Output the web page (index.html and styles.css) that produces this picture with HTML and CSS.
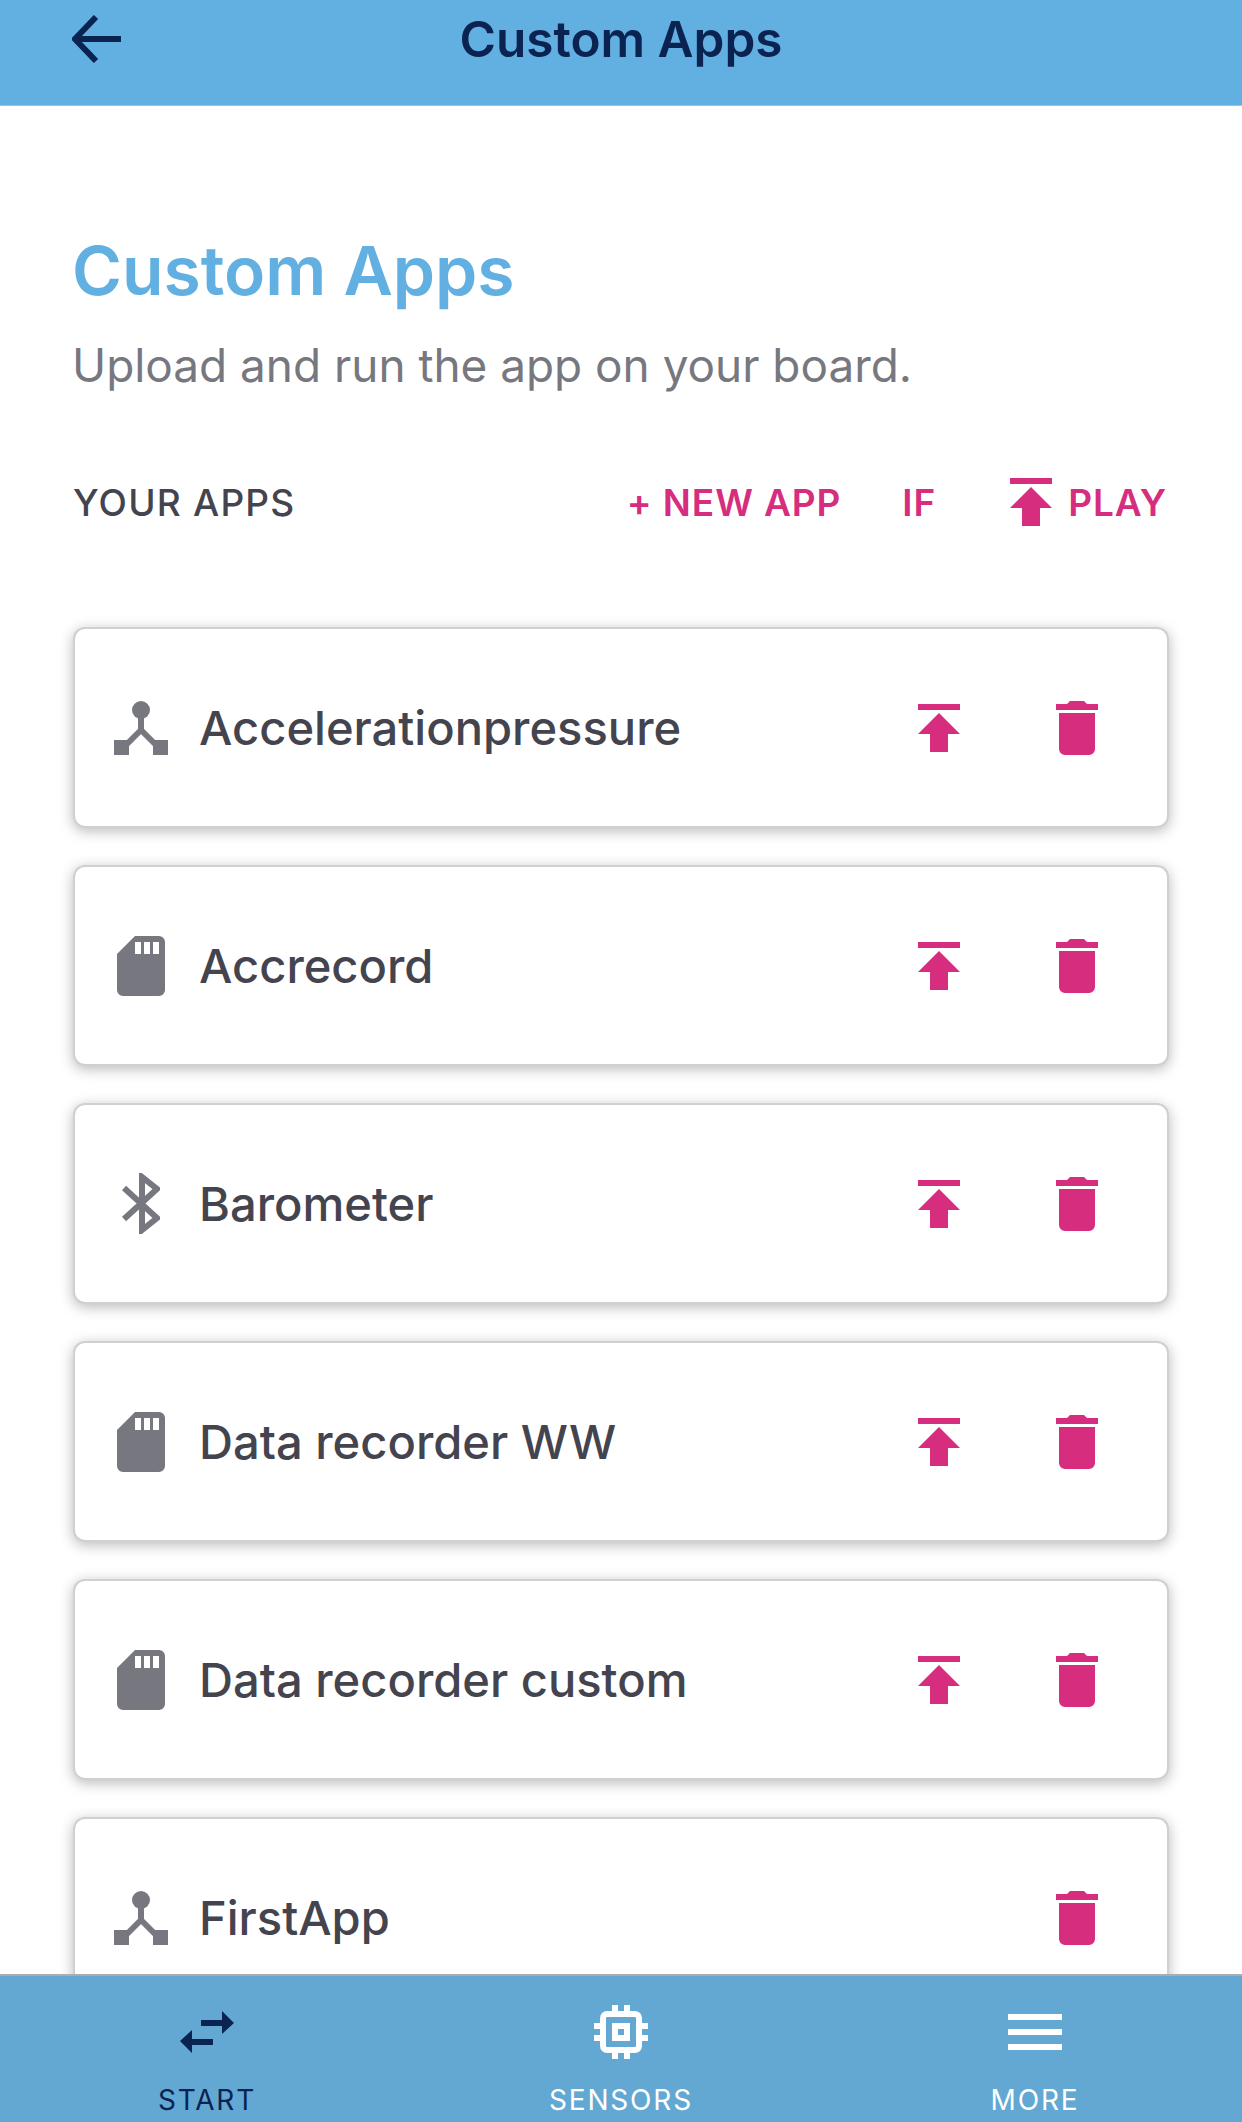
FILE: index.html
```html
<!DOCTYPE html>
<html lang="en">
<head>
<meta charset="utf-8">
<title>Custom Apps</title>
<link rel="stylesheet" href="styles.css">
</head>
<body>
<svg class="defs" width="0" height="0" aria-hidden="true">
  <defs>
    <symbol id="i-upload" viewBox="0 0 42 48"><path d="M0 0H42V6H0ZM21 9L42 30H30V48H12V30H0Z"/></symbol>
    <symbol id="i-trash" viewBox="0 0 42 54"><path d="M0 3H11L14 0H28L31 3H42V9H0ZM3 12H39V48A6 6 0 0 1 33 54H9A6 6 0 0 1 3 48Z"/></symbol>
    <symbol id="i-net" viewBox="0 0 54 54"><circle cx="27" cy="9" r="9"/><path d="M0 39H15V54H0ZM39 39H54V54H39Z"/><path d="M27 16V29M27 29L9 47M27 29L45 47" fill="none" stroke="currentColor" stroke-width="6"/></symbol>
    <symbol id="i-sd" viewBox="0 0 48 60"><path fill-rule="evenodd" d="M18 0H42A6 6 0 0 1 48 6V54A6 6 0 0 1 42 60H6A6 6 0 0 1 0 54V18ZM18 6V18H24V6ZM27 6V18H33V6ZM36 6V18H42V6Z"/></symbol>
    <symbol id="i-bt" viewBox="0 0 38 61"><path d="M2 15L35 45L20 57V4L35 16L2 46" fill="none" stroke="currentColor" stroke-width="6"/></symbol>
  </defs>
</svg>
<div class="app">
  <header class="topbar">
    <svg class="back" viewBox="0 0 50 48" width="50" height="48"><path d="M49 24H5M24 2L3 24L24 46" fill="none" stroke="currentColor" stroke-width="6"/></svg>
    <span class="topbar-title">Custom Apps</span>
  </header>
  <main class="content">
    <h1 class="page-title">Custom Apps</h1>
    <p class="page-sub">Upload and run the app on your board.</p>
    <div class="toolbar">
      <span class="toolbar-label">YOUR APPS</span>
      <div class="toolbar-actions">
        <span class="action">+ NEW APP</span>
        <span class="action">IF</span>
        <span class="action action-play"><svg class="ic-upload"><use href="#i-upload"/></svg>PLAY</span>
      </div>
    </div>
    <ul class="cards">
      <li class="card"><span class="card-icon"><svg class="ic-net"><use href="#i-net"/></svg></span><span class="card-name">Accelerationpressure</span><svg class="ic-upload"><use href="#i-upload"/></svg><svg class="ic-trash"><use href="#i-trash"/></svg></li>
      <li class="card"><span class="card-icon"><svg class="ic-sd"><use href="#i-sd"/></svg></span><span class="card-name">Accrecord</span><svg class="ic-upload"><use href="#i-upload"/></svg><svg class="ic-trash"><use href="#i-trash"/></svg></li>
      <li class="card"><span class="card-icon"><svg class="ic-bt"><use href="#i-bt"/></svg></span><span class="card-name">Barometer</span><svg class="ic-upload"><use href="#i-upload"/></svg><svg class="ic-trash"><use href="#i-trash"/></svg></li>
      <li class="card"><span class="card-icon"><svg class="ic-sd"><use href="#i-sd"/></svg></span><span class="card-name">Data recorder WW</span><svg class="ic-upload"><use href="#i-upload"/></svg><svg class="ic-trash"><use href="#i-trash"/></svg></li>
      <li class="card"><span class="card-icon"><svg class="ic-sd"><use href="#i-sd"/></svg></span><span class="card-name">Data recorder custom</span><svg class="ic-upload"><use href="#i-upload"/></svg><svg class="ic-trash"><use href="#i-trash"/></svg></li>
      <li class="card"><span class="card-icon"><svg class="ic-net"><use href="#i-net"/></svg></span><span class="card-name">FirstApp</span><svg class="ic-trash"><use href="#i-trash"/></svg></li>
    </ul>
  </main>
  <nav class="tabbar">
    <div class="tab tab-active">
      <svg class="tab-icon" viewBox="0 0 54 54" width="54" height="54"><path d="M21 15H42V6L54 18L42 29V21H21ZM12 25V34H33V40H12V48L0 36Z"/></svg>
      <span class="tab-label">START</span>
    </div>
    <div class="tab">
      <svg class="tab-icon" viewBox="0 0 54 54" width="54" height="54"><path d="M18 0H24V6H18ZM30 0H36V6H30ZM18 48H24V54H18ZM30 48H36V54H30ZM0 18H6V24H0ZM0 30H6V36H0ZM48 18H54V24H48ZM48 30H54V36H48Z"/><rect x="9" y="9" width="36" height="36" rx="4" fill="none" stroke="currentColor" stroke-width="6"/><path fill-rule="evenodd" d="M18 18H36V36H18ZM24 24V30H30V24Z"/></svg>
      <span class="tab-label">SENSORS</span>
    </div>
    <div class="tab">
      <svg class="tab-icon" viewBox="0 0 54 54" width="54" height="54"><path d="M0 9H54V15H0ZM0 24H54V30H0ZM0 39H54V45H0Z"/></svg>
      <span class="tab-label">MORE</span>
    </div>
  </nav>
</div>
</body>
</html>
```

FILE: styles.css
```css
* { box-sizing: border-box; }
html, body { margin: 0; padding: 0; }
body { font-family: Inter, "Liberation Sans", sans-serif; background: #fff; }
.defs { position: absolute; }
svg { fill: currentColor; display: block; flex: none; }

.app { width: 1242px; height: 2122px; display: flex; flex-direction: column; overflow: hidden; }

.topbar { height: 106px; flex: none; background: #62b0e2; border-bottom: 1px solid #b5bcc2; color: #0b2350; padding: 15px 0 0 72px; position: relative; }
.back { margin: 0; }
.topbar-title { position: absolute; left: 0; right: 0; top: 11px; text-align: center; font-size: 49.5px; line-height: 56px; font-weight: 600; }

.content { flex: 1; min-height: 0; overflow: hidden; padding: 0 75px; }
.page-title { margin: 124px 0 0 -3px; font-size: 67.8px; line-height: 80px; font-weight: 600; color: #62b0e2; }
.page-sub { margin: 28px 0 0 -3px; font-size: 45.9px; line-height: 56px; font-weight: 400; color: #77787f; }

.toolbar { display: flex; justify-content: space-between; align-items: center; margin: 78px 0 0 -2px; height: 60px; }
.toolbar-label { font-size: 37px; font-weight: 550; color: #44444f; letter-spacing: 1.2px; }
.toolbar-actions { display: flex; align-items: center; gap: 61px; }
.action { font-size: 37px; font-weight: 600; color: #d62d7e; letter-spacing: .9px; }
.action-play { display: flex; align-items: center; gap: 16px; margin-left: 13px; }

.cards { list-style: none; margin: 0; padding: 0; margin-top: 97px; display: flex; flex-direction: column; gap: 41px; }
.card { height: 197px; flex: none; background: #fff; border-radius: 10px; display: flex; align-items: center; padding-right: 69px; box-shadow: 0 0 0 2px #d0d0d0, 0 3px 14px 2px rgba(0,0,0,.28); }
.card-icon { width: 124px; padding-left: 39px; display: flex; align-items: center; justify-content: center; padding-right: 31px; color: #77787f; flex: none; }
.card-name { flex: 1; font-size: 47.1px; font-weight: 550; color: #44444f; }
.ic-upload { width: 42px; height: 48px; color: #d62d7e; }
.ic-trash { width: 42px; height: 54px; color: #d62d7e; margin-left: 96px; }
.ic-net { width: 54px; height: 54px; }
.ic-sd { width: 48px; height: 60px; }
.ic-bt { width: 38px; height: 61px; }

.tabbar { height: 148px; flex: none; background: #62a8d2; border-top: 2px solid #a9adb0; display: grid; grid-template-columns: repeat(3, 1fr); position: relative; color: #fff; }
.tab { display: flex; flex-direction: column; align-items: center; padding-top: 29px; }
.tab-active { color: #0b2350; }
.tab-label { font-size: 28px; line-height: 34px; margin-top: 24px; letter-spacing: 1.8px; }
```
